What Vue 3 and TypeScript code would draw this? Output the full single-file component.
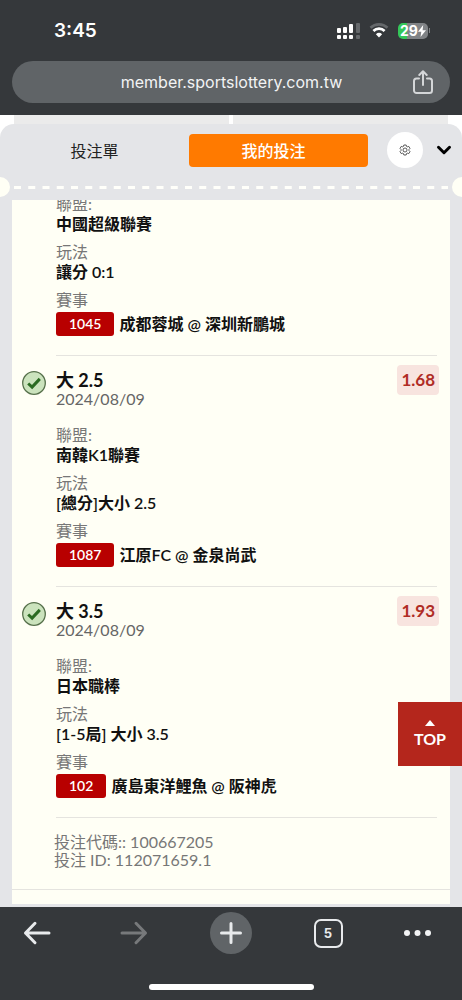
<script setup lang="ts">
interface Field {
  label: string
  value: string
}

interface Leg {
  pick?: string
  date?: string
  odds?: string
  fields: Field[]
  code: string
  match: string
}

const legs: Leg[] = [
  {
    fields: [
      { label: '聯盟:', value: '中國超級聯賽' },
      { label: '玩法', value: '讓分 0:1' },
    ],
    code: '1045',
    match: '成都蓉城 @ 深圳新鵬城',
  },
  {
    pick: '大 2.5',
    date: '2024/08/09',
    odds: '1.68',
    fields: [
      { label: '聯盟:', value: '南韓K1聯賽' },
      { label: '玩法', value: '[總分]大小 2.5' },
    ],
    code: '1087',
    match: '江原FC @ 金泉尚武',
  },
  {
    pick: '大 3.5',
    date: '2024/08/09',
    odds: '1.93',
    fields: [
      { label: '聯盟:', value: '日本職棒' },
      { label: '玩法', value: '[1-5局] 大小 3.5' },
    ],
    code: '102',
    match: '廣島東洋鯉魚 @ 阪神虎',
  },
]

const toTop = () => window.scrollTo({ top: 0, behavior: 'smooth' })
</script>

<template>
  <div class="phone">
    <header class="chrome">
      <div class="status">
        <span class="clock">3:45</span>
        <div class="indicators">
          <svg width="24" height="16" viewBox="0 0 24 16" aria-hidden="true">
            <g fill="#fff">
              <rect x="0" y="5" width="4" height="5" rx="1" />
              <rect x="6" y="4" width="4" height="6" rx="1" />
              <rect x="12" y="1" width="4" height="9" rx="1" />
              <rect x="0" y="12" width="4" height="4" rx="1" />
              <rect x="6" y="12" width="4" height="4" rx="1" />
              <rect x="12" y="12" width="4" height="4" rx="1" />
            </g>
            <g fill="#65686b">
              <rect x="19" y="0" width="4" height="10" rx="1" />
              <rect x="19" y="12" width="4" height="4" rx="1" />
            </g>
          </svg>
          <svg class="wifi" width="20" height="15" viewBox="0 0 20 15" aria-hidden="true">
            <path d="M1.5 4.8a12.2 12.2 0 0 1 17 0" fill="none" stroke="#65686b" stroke-width="2.6" />
            <path d="M4.4 8a8 8 0 0 1 11.2 0" fill="none" stroke="#fff" stroke-width="2.7" />
            <path d="M10 14.4 6.9 11.2a4.5 4.5 0 0 1 6.2 0z" fill="#fff" />
          </svg>
          <div class="battery">
            <span class="level">29</span>
            <svg width="8" height="12" viewBox="0 0 8 12" aria-hidden="true">
              <path d="M5.2 0 0 6.8h3.3L2.5 12 8 5.2H4.6z" fill="#fff" />
            </svg>
          </div>
          <i class="battery-tip"></i>
        </div>
      </div>
      <div class="address">
        <button class="url" type="button">member.sportslottery.com.tw</button>
        <button class="share" type="button" aria-label="分享">
          <svg width="20" height="24" viewBox="0 0 20 24" fill="none" stroke="#d4d6d8" stroke-width="2" stroke-linecap="round" stroke-linejoin="round">
            <path d="M6 8.5H3.5A2.5 2.5 0 0 0 1 11v9.5A2.5 2.5 0 0 0 3.5 23h13a2.5 2.5 0 0 0 2.5-2.5V11a2.5 2.5 0 0 0-2.5-2.5H14" />
            <path d="M10 15V1.5M6.3 5 10 1.3 13.7 5" />
          </svg>
        </button>
      </div>
    </header>

    <div class="backdrop"><i></i><i></i></div>

    <main class="panel">
      <nav class="tabs">
        <div class="choices">
          <button class="tab" type="button">投注單</button>
          <button class="tab active" type="button">我的投注</button>
        </div>
        <button class="gear" type="button" aria-label="設定">
          <svg width="12" height="12" viewBox="0 0 24 24" fill="none" stroke="#333" stroke-width="1.6" stroke-linejoin="round">
            <path d="M9.7 2h4.6l.8 2.9 1.5.8 2.9-.9 2.5 3.9-2 2.2v2.2l2 2.2-2.5 3.9-2.9-.9-1.5.8-.8 2.9H9.7l-.8-2.9-1.5-.8-2.9.9L2 15.3l2-2.2v-2.2L2 8.7l2.5-3.9 2.9.9 1.5-.8z" />
            <circle cx="12" cy="12" r="4" />
          </svg>
        </button>
        <button class="collapse" type="button" aria-label="收合">
          <svg width="16" height="10" viewBox="0 0 16 10" fill="none" stroke="#000" stroke-width="3" stroke-linecap="round" stroke-linejoin="round">
            <path d="M2.5 2.3 8 7.7l5.5-5.4" />
          </svg>
        </button>
      </nav>

      <div class="perforation">
        <i class="notch left"></i>
        <svg class="dashes" height="3" aria-hidden="true">
          <line x1="1" y1="1.5" x2="100%" y2="1.5" stroke="#fffffa" stroke-width="3" stroke-dasharray="7 7.25" />
        </svg>
        <i class="notch right"></i>
      </div>

      <section class="ticket">
        <article v-for="leg in legs" :key="leg.code" class="leg">
          <div class="mark">
            <svg v-if="leg.pick" width="24" height="24" viewBox="0 0 24 24" role="img" aria-label="贏">
              <circle cx="12" cy="12" r="11.3" fill="#cbe3bd" stroke="#57714c" stroke-width="1.3" />
              <path d="m6.2 12.5 3.9 3.6 7.7-8.2" fill="none" stroke="#2b6b22" stroke-width="3" />
            </svg>
          </div>
          <div class="body" :class="{ scrolled: !leg.pick }">
            <div v-if="leg.pick" class="head">
              <div>
                <h2>{{ leg.pick }}</h2>
                <time>{{ leg.date }}</time>
              </div>
              <span class="odds">{{ leg.odds }}</span>
            </div>
            <dl>
              <div v-for="field in leg.fields" :key="field.label">
                <dt>{{ field.label }}</dt>
                <dd>{{ field.value }}</dd>
              </div>
              <div>
                <dt>賽事</dt>
                <dd class="match"><span class="code">{{ leg.code }}</span>{{ leg.match }}</dd>
              </div>
            </dl>
          </div>
        </article>
        <footer class="ids">
          <p>投注代碼:: 100667205</p>
          <p>投注 ID: 112071659.1</p>
        </footer>
      </section>
    </main>

    <button class="top" type="button" @click="toTop">
      <svg width="10" height="6" viewBox="0 0 10 6" aria-hidden="true"><path d="M5 0l5 6H0z" fill="#fff" /></svg>
      TOP
    </button>

    <nav class="toolbar">
      <div class="actions">
        <button type="button" aria-label="返回">
          <svg width="28" height="24" viewBox="0 0 28 24" fill="none" stroke="#e8eaec" stroke-width="3" stroke-linecap="round" stroke-linejoin="round">
            <path d="M26 12H2.5M12 2.3 2.5 12l9.5 9.7" />
          </svg>
        </button>
        <button type="button" aria-label="前進">
          <svg width="28" height="24" viewBox="0 0 28 24" fill="none" stroke="#77797b" stroke-width="3" stroke-linecap="round" stroke-linejoin="round">
            <path d="M2 12h23.5M16 2.3l9.5 9.7-9.5 9.7" />
          </svg>
        </button>
        <button class="plus" type="button" aria-label="新分頁">
          <svg width="22" height="22" viewBox="0 0 22 22" fill="none" stroke="#e8eaec" stroke-width="3" stroke-linecap="round">
            <path d="M11 1.5v19M1.5 11h19" />
          </svg>
        </button>
        <button type="button" aria-label="分頁"><span class="count">5</span></button>
        <button class="more" type="button" aria-label="更多">
          <svg width="28" height="6" viewBox="0 0 28 6" fill="#f2f3f4">
            <circle cx="3" cy="3" r="3" /><circle cx="13.5" cy="3" r="3" /><circle cx="24" cy="3" r="3" />
          </svg>
        </button>
      </div>
      <i class="home"></i>
    </nav>
  </div>
</template>

<style>
body {
  margin: 0;
}
</style>

<style scoped>
.phone {
  display: flex;
  flex-direction: column;
  min-height: 100vh;
  background: #e4e5e8;
  font-family: Lato, "Noto Sans CJK TC", sans-serif;
  font-size: 16px;
}
button {
  display: flex;
  align-items: center;
  justify-content: center;
  margin: 0;
  padding: 0;
  border: 0;
  background: none;
  font: inherit;
  color: inherit;
}
h2, p, dl, dd {
  margin: 0;
}
svg {
  display: block;
  flex: none;
}

.chrome {
  padding: 0 12px 12px;
  background: #35383b;
  color: #fff;
}
.status {
  display: flex;
  align-items: center;
  justify-content: space-between;
  height: 61px;
  padding: 0 20px 0 42px;
  font-family: Inter, sans-serif;
}
.clock {
  font-size: 19px;
  font-weight: 600;
}
.indicators {
  display: flex;
  align-items: center;
}
.wifi {
  margin: 0 9px 0 8px;
}
.battery {
  display: flex;
  align-items: center;
  justify-content: center;
  width: 30px;
  height: 16px;
  border-radius: 5px;
  background: linear-gradient(90deg, #34c759 30%, #808386 30%);
}
.level {
  font-size: 14px;
  font-weight: 700;
}
.battery-tip {
  width: 1px;
  height: 5px;
  margin-left: 1px;
  background: #808386;
}
.address {
  display: flex;
  align-items: center;
  height: 42px;
  padding: 0 17px 0 38px;
  border-radius: 21px;
  background: #606467;
}
.url {
  flex: 1;
  font-family: Inter, sans-serif;
  color: #f2f3f4;
}

.backdrop {
  display: flex;
  gap: 4px;
  height: 24px;
  padding: 0 14px;
  margin-bottom: -15px;
  background: #fff;
}
.backdrop i {
  flex: 1;
  background: #ebebeb;
}

.panel {
  display: flex;
  flex: 1;
  flex-direction: column;
  padding-bottom: 3px;
  border-radius: 14px 14px 0 0;
  background: #e4e5e8;
}
.tabs {
  display: flex;
  align-items: center;
  padding: 8px 10px 0 5px;
}
.choices {
  display: grid;
  flex: 1;
  grid-template-columns: 1fr 1fr;
  gap: 5px;
  margin-right: 19px;
}
.tab {
  height: 33px;
  border-radius: 4px;
  color: #222;
}
.tab.active {
  padding-right: 10px;
  background: #ff7a00;
  color: #fff;
  font-weight: 500;
}
.gear {
  width: 36px;
  height: 36px;
  border-radius: 50%;
  background: #fff;
}
.collapse {
  margin-left: 13px;
}

.perforation {
  display: flex;
  align-items: center;
  height: 20px;
  margin: 9px 0 3px;
  overflow: hidden;
}
.notch {
  flex: none;
  width: 20px;
  height: 20px;
  border-radius: 50%;
  background: #fffff5;
}
.notch.left {
  margin-left: -10px;
}
.notch.right {
  margin-right: -10px;
}
.dashes {
  flex: 1;
  width: 0;
  margin: 0 4px 0 3px;
}

.ticket {
  flex: 1;
  margin: 0 12px;
  overflow: hidden;
  background: #fffff5;
  color: #111;
}
.leg {
  display: flex;
  gap: 10px;
  padding: 0 13px 0 10px;
}
.mark {
  flex: none;
  width: 24px;
  padding-top: 15px;
}
.body {
  flex: 1;
  padding: 14px 0 19px;
  border-bottom: 1px solid #e5e4df;
}
.body.scrolled {
  margin-top: -6px;
  padding-top: 0;
}
.head {
  display: flex;
  align-items: flex-start;
  justify-content: space-between;
  margin-bottom: 17px;
}
h2 {
  font-size: 18px;
  font-weight: 700;
  line-height: 20px;
}
time {
  display: block;
  line-height: 18px;
  color: #666;
}
.odds {
  margin: -5px -2px 0 0;
  padding: 0 4px;
  border-radius: 4px;
  background: #f8e4df;
  color: #b02c25;
  font-size: 17px;
  font-weight: 700;
  line-height: 30px;
}
dl {
  display: flex;
  flex-direction: column;
  gap: 8px;
}
dt {
  line-height: 20px;
  color: #777;
}
dd {
  font-weight: 600;
  line-height: 20px;
}
.match {
  display: flex;
  align-items: center;
  gap: 5px;
  margin-top: 2px;
}
.code {
  padding: 0 13px;
  border-radius: 3px;
  background: #b80000;
  color: #fff;
  font-size: 14px;
  line-height: 24px;
}
.ids {
  padding: 15px 42px 20px;
  border-bottom: 1px solid #e5e4df;
  line-height: 18px;
  color: #777;
}

.top {
  position: fixed;
  right: 0;
  bottom: 234px;
  flex-direction: column;
  gap: 3px;
  width: 64px;
  height: 64px;
  background: #b4261c;
  color: #fff;
  font-weight: 700;
}

.toolbar {
  padding: 5px 16px 10px;
  background: #35383b;
}
.actions {
  display: grid;
  grid-template-columns: 42px 42px 42px 42px 42px;
  justify-content: space-between;
}
.actions button {
  height: 42px;
}
.actions .plus {
  border-radius: 50%;
  background: #606467;
}
.actions .more {
  justify-content: flex-start;
}
.count {
  box-sizing: border-box;
  width: 29px;
  height: 29px;
  border: 2px solid #e8eaec;
  border-radius: 7px;
  color: #e8eaec;
  font: 700 13px/25px Inter, sans-serif;
}
.home {
  display: block;
  width: 165px;
  height: 6px;
  margin: 30px auto 0;
  border-radius: 3px;
  background: #fff;
}
</style>
